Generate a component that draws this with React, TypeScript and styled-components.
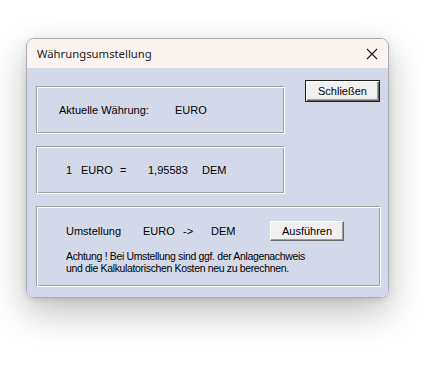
import React from 'react';
import styled, { createGlobalStyle } from 'styled-components';

const GlobalStyle = createGlobalStyle`
    html, body {
        margin: 0;
        background: #ffffff;
    }
`

const Page = styled.div`
    padding: 38px 0 0 26px;
    height: 367px;
    box-sizing: border-box;
`

const Window = styled.div`
    width: 363px;
    height: 260px;
    box-sizing: border-box;
    border: 1px solid #a9abb3;
    border-radius: 8px;
    overflow: hidden;
    display: flex;
    flex-direction: column;
    box-shadow: 0 14px 36px rgba(0, 0, 0, 0.26), 0 2px 6px rgba(0, 0, 0, 0.1);
`

const TitleBar = styled.div`
    height: 29px;
    background: #faf3ef;
    display: flex;
    align-items: center;
    padding: 0 10px 0 10px;
    font-family: "Noto Sans", "Open Sans", sans-serif;
    font-size: 11.3px;
    color: #1a1a1a;

    span {
        flex-grow: 1;
    }
`

const Client = styled.div`
    flex-grow: 1;
    background: #d4d9ea;
    padding: 12px 7px 10px 9px;
    font-family: "Liberation Sans", Arial, sans-serif;
    font-size: 11px;
    color: #000;
    display: flex;
    flex-direction: column;
    gap: 12px;
`

const TopRow = styled.div`
    display: flex;
    justify-content: space-between;
    align-items: flex-start;
`

const Column = styled.div`
    display: flex;
    flex-direction: column;
    gap: 12px;
    margin-top: 6px;
`

const Group = styled.div<{ $w: number; $h: number }>`
    width: ${p => p.$w}px;
    height: ${p => p.$h}px;
    box-sizing: border-box;
    border: 1px solid #a0a0a0;
    border-right-color: #ffffff;
    border-bottom-color: #ffffff;
    box-shadow: inset 1px 1px 0 #ffffff, inset -1px -1px 0 #a0a0a0;
`

const LineBox = styled(Group)<{ $pad: number }>`
    display: flex;
    align-items: center;
    padding-left: ${p => p.$pad}px;
`

const Cell = styled.span<{ $w: number }>`
    display: inline-block;
    width: ${p => p.$w}px;
    white-space: nowrap;
`

const ConvertBox = styled(Group)`
    padding: 14px 0 0 29px;
`

const ConvertRow = styled.div`
    display: flex;
    align-items: center;
    height: 20px;
`

const Note = styled.div`
    margin-top: 9px;
    line-height: 12px;
    font-size: 10.5px;
    letter-spacing: -0.35px;
`

const Button = styled.button<{ $default?: boolean }>`
    font-family: "Liberation Sans", Arial, sans-serif;
    font-size: 11px;
    color: #000;
    background: #f0f0f0;
    box-sizing: border-box;
    padding: 0;
    border: 1px solid;
    border-color: #ffffff #696969 #696969 #ffffff;
    box-shadow: inset -1px -1px 0 #a0a0a0;
    ${p => p.$default && `
        border: 1px solid #1e1e1e;
        box-shadow: inset 1px 1px 0 #ffffff, inset -1px -1px 0 #696969, inset -2px -2px 0 #a0a0a0;
    `}
`

const CloseButton = styled(Button)`
    width: 75px;
    height: 22px;
    margin-right: 1px;
`

const RunButton = styled(Button)`
    width: 74px;
    height: 20px;
`

const CloseIcon = () => (
    <svg width="12" height="12" viewBox="0 0 12 12">
        <path d="M1 1 L11 11 M11 1 L1 11" stroke="#1a1a1a" strokeWidth="1.1" fill="none" />
    </svg>
)

const App: React.FC = () => {
    return <Page>
        <GlobalStyle />
        <Window>
            <TitleBar>
                <span>Währungsumstellung</span>
                <CloseIcon />
            </TitleBar>
            <Client>
                <TopRow>
                    <Column>
                        <LineBox $w={249} $h={48} $pad={22}>
                            <Cell $w={116}>Aktuelle Währung:</Cell>
                            <Cell $w={40}>EURO</Cell>
                        </LineBox>
                        <LineBox $w={249} $h={48} $pad={29}>
                            <Cell $w={15}>1</Cell>
                            <Cell $w={39}>EURO</Cell>
                            <Cell $w={28}>=</Cell>
                            <Cell $w={54}>1,95583</Cell>
                            <Cell $w={30}>DEM</Cell>
                        </LineBox>
                    </Column>
                    <CloseButton $default>Schließen</CloseButton>
                </TopRow>
                <ConvertBox $w={345} $h={81}>
                    <ConvertRow>
                        <Cell $w={77}>Umstellung</Cell>
                        <Cell $w={40}>EURO</Cell>
                        <Cell $w={28}>-&gt;</Cell>
                        <Cell $w={59}>DEM</Cell>
                        <RunButton>Ausführen</RunButton>
                    </ConvertRow>
                    <Note>
                        Achtung ! Bei Umstellung sind ggf. der Anlagenachweis<br />
                        und die Kalkulatorischen Kosten neu zu berechnen.
                    </Note>
                </ConvertBox>
            </Client>
        </Window>
    </Page>
}

export default App;
